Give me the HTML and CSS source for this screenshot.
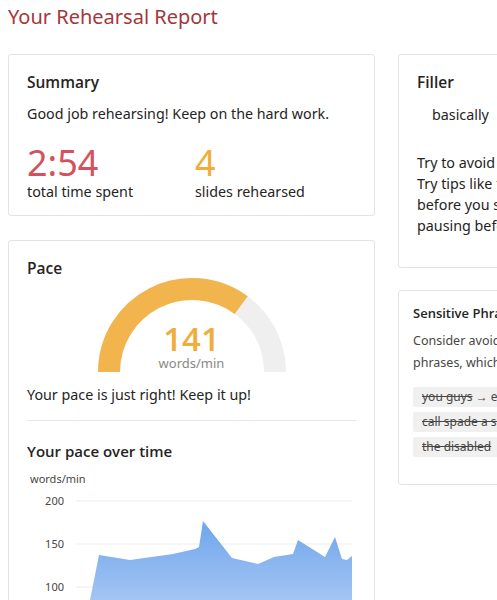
FILE: index.html
```html
<!DOCTYPE html>
<html lang="en">

<head>
    <meta charset="UTF-8">
    <meta name="viewport" content="width=device-width, initial-scale=1.0">
    <title>Your Rehearsal Report</title>
    <link rel="stylesheet" href="styles.css">
</head>

<body>

    <div id="page">
        <h1 class="title">Your Rehearsal Report</h1>

        <div class="columns">
            <!-- Left column -->
            <div class="column">
                <div class="card summaryCard">
                    <h2 class="cardTitle">Summary</h2>
                    <p class="summaryText">Good job rehearsing! Keep on the hard work.</p>
                    <div class="stats">
                        <div class="stat">
                            <div class="statValue timeValue">2:54</div>
                            <div class="statLabel">total time spent</div>
                        </div>
                        <div class="stat">
                            <div class="statValue slidesValue">4</div>
                            <div class="statLabel">slides rehearsed</div>
                        </div>
                    </div>
                </div>

                <div class="card paceCard">
                    <h2 class="cardTitle">Pace</h2>
                    <div class="gauge">
                        <svg class="gaugeArc" width="188" height="94" viewBox="0 0 188 94">
                            <path d="M 11 94 A 83 83 0 0 1 177 94" fill="none" stroke="#f0efef" stroke-width="22" />
                            <path d="M 11 94 A 83 83 0 0 1 143.2 27.2" fill="none" stroke="#f2b44c" stroke-width="22" />
                        </svg>
                        <div class="gaugeText">
                            <div class="gaugeValue">141</div>
                            <div class="gaugeUnit">words/min</div>
                        </div>
                    </div>
                    <p class="paceText">Your pace is just right! Keep it up!</p>
                    <hr class="divider">
                    <h3 class="chartTitle">Your pace over time</h3>
                    <div class="axisUnit">words/min</div>
                    <svg class="chart" width="329" height="120" viewBox="0 0 329 120">
                        <defs>
                            <linearGradient id="areaFill" x1="0" y1="0" x2="0" y2="1">
                                <stop offset="0" stop-color="#6fa5ec" />
                                <stop offset="1" stop-color="#a9c9f4" />
                            </linearGradient>
                        </defs>
                        <line x1="49" y1="11" x2="325" y2="11" stroke="#ebebeb" />
                        <line x1="49" y1="54" x2="325" y2="54" stroke="#ebebeb" />
                        <line x1="49" y1="97" x2="325" y2="97" stroke="#ebebeb" />
                        <text x="37" y="15" class="axisLabel">200</text>
                        <text x="37" y="58" class="axisLabel">150</text>
                        <text x="37" y="101" class="axisLabel">100</text>
                        <polygon fill="url(#areaFill)"
                            points="61,120 72,65 103,70 146,64 168,59 172,57 176,31 205,68 231,74 247,67 266,64 271,50 298,67 308,47 315,69 320,70 325,66 325,120" />
                    </svg>
                </div>
            </div>

            <!-- Right column -->
            <div class="column rightColumn">
                <div class="card fillerCard">
                    <h2 class="cardTitle">Filler</h2>
                    <div class="fillerWord">basically</div>
                    <p class="fillerText">Try to avoid filler words when you rehearse.<br>
                        Try tips like taking a breath and planning<br>
                        before you speak, and practice slowly<br>
                        pausing before the next idea.</p>
                </div>

                <div class="card sensitiveCard">
                    <h2 class="smallTitle">Sensitive Phrases</h2>
                    <p class="sensitiveText">Consider avoiding these culturally sensitive<br>
                        phrases, which may offend your audience.</p>
                    <div class="chips">
                        <span class="chip"><s>you guys</s> &rarr; everyone</span>
                        <span class="chip"><s>call spade a spade</s></span>
                        <span class="chip"><s>the disabled</s></span>
                    </div>
                </div>
            </div>
        </div>
    </div>

</body>

</html>
```

FILE: styles.css
```css
body {
    font-family: 'Noto Sans', 'Open Sans', sans-serif;
    margin: 0;
    padding: 0;
    background-color: #fff;
    color: #252423;
    overflow: hidden; /* page is wider than the window */
}

#page {
    width: 780px;
    padding: 3px 8px 0;
}

.title {
    margin: 0 0 23px;
    font-size: 20px;
    line-height: 28px;
    font-weight: 400;
    color: #a4373a;
}

.columns {
    display: grid;
    grid-template-columns: 367px 367px;
    column-gap: 23px;
    align-items: start;
}

.column {
    display: flex;
    flex-direction: column;
    gap: 24px;
}

.rightColumn {
    gap: 22px;
}

.card {
    border: 1px solid #e3e3e3;
    border-radius: 3px;
    padding: 17px 18px;
    background-color: #fff;
}

.cardTitle {
    margin: 0;
    font-family: 'Open Sans', 'Noto Sans', sans-serif;
    font-size: 15.5px;
    line-height: 20px;
    font-weight: 600;
}

.summaryCard {
    padding-bottom: 15px;
}

.summaryText {
    margin: 12px 0 0;
    font-size: 14.3px;
    line-height: 20px;
}

.stats {
    display: grid;
    grid-template-columns: 168px auto;
    margin-top: 20px;
}

.statValue {
    font-size: 36px;
    line-height: 38px;
    font-weight: 400;
}

.timeValue {
    color: #d6515d;
}

.slidesValue {
    color: #f0ad3c;
}

.statLabel {
    margin-top: 2px;
    font-size: 14.3px;
    line-height: 16px;
}

/* Pace */
.paceCard {
    height: 400px;
}

.gauge {
    display: grid;
    justify-items: center;
    align-items: end;
}

.gaugeArc,
.gaugeText {
    grid-area: 1 / 1;
}

.gaugeText {
    text-align: center;
}

.gaugeValue {
    font-family: 'Open Sans', 'Noto Sans', sans-serif;
    font-size: 33px;
    line-height: 32px;
    font-weight: 600;
    color: #f0ad3c;
}

.gaugeUnit {
    font-size: 13px;
    line-height: 17px;
    color: #8a8886;
}

.paceText {
    margin: 13px 0 0;
    font-size: 14.3px;
    line-height: 20px;
}

.divider {
    border: none;
    border-top: 1px solid #e6e6e6;
    margin: 15px 0 0;
}

.chartTitle {
    margin: 20px 0 0;
    font-family: 'Open Sans', 'Noto Sans', sans-serif;
    font-size: 15px;
    line-height: 20px;
    font-weight: 600;
}

.axisUnit {
    margin: 10px 0 0 3px;
    font-size: 11px;
    line-height: 16px;
    color: #484644;
}

.chart {
    display: block;
    margin-top: 3px;
}

.axisLabel {
    font-family: 'Noto Sans', sans-serif;
    font-size: 11px;
    fill: #484644;
    text-anchor: end;
}

/* Filler */
.fillerCard {
    padding-bottom: 31px;
}

.fillerWord {
    margin: 13px 0 0 15px;
    font-size: 14.3px;
    line-height: 20px;
}

.fillerText {
    margin: 27px 0 0;
    font-size: 14.3px;
    line-height: 21px;
    white-space: nowrap;
}

/* Sensitive phrases */
.sensitiveCard {
    padding: 13px 14px 27px;
}

.smallTitle {
    margin: 0;
    font-family: 'Open Sans', 'Noto Sans', sans-serif;
    font-size: 13px;
    line-height: 18px;
    font-weight: 600;
}

.sensitiveText {
    margin: 8px 0 0;
    font-size: 12.5px;
    line-height: 22px;
    color: #484644;
    white-space: nowrap;
}

.chips {
    display: flex;
    flex-direction: column;
    align-items: flex-start;
    gap: 5px;
    margin-top: 13px;
}

.chip {
    background-color: #f0f0f0;
    color: #484644;
    font-size: 12px;
    line-height: 20px;
    padding: 0 7px 0 9px;
    border-radius: 2px;
    white-space: nowrap;
}
```
